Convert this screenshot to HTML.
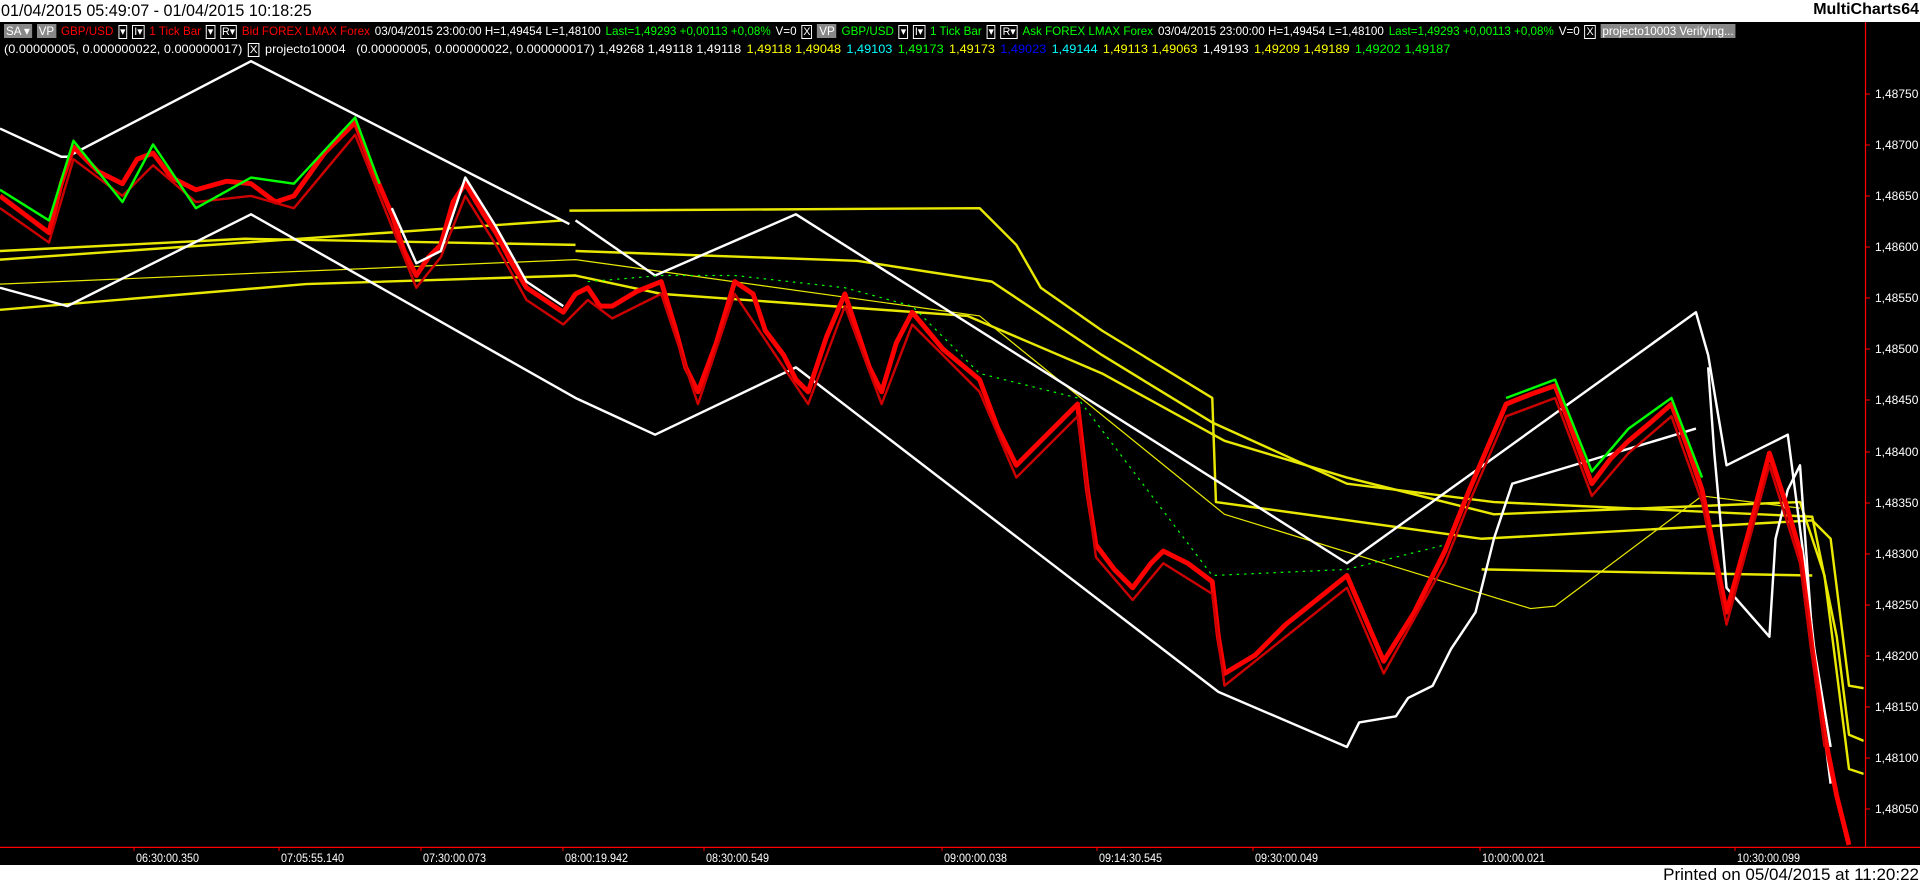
<!DOCTYPE html>
<html><head><meta charset="utf-8"><style>
body{margin:0;width:1920px;height:885px;overflow:hidden;background:#000;font-family:"Liberation Sans",Arial,sans-serif;position:relative}
#top{position:absolute;left:0;top:0;width:1920px;height:22px;background:#fff}
#title{position:absolute;left:1px;top:1px;font-size:17px;color:#000;transform:scaleX(0.95);transform-origin:0 0;white-space:nowrap}
#mc{position:absolute;right:1px;top:1px;font-size:16px;font-weight:bold;color:#000}
#bot{position:absolute;left:0;top:865px;width:1920px;height:20px;background:#fff}
#pr{position:absolute;right:1px;top:865px;font-size:17px;color:#000;white-space:nowrap}
.row{position:absolute;left:4px;font-size:12px;white-space:nowrap;color:#fff;transform-origin:0 0}
.row span{margin-right:5px}
.b{display:inline-block;border:1px solid #fff;padding:0 1px;line-height:12px;font-size:11px}
.g{display:inline-block;background:#888;color:#fff;padding:0 2px;line-height:14px}
.r{color:#f00}.gr{color:#0f0}.y{color:#ff0}.c{color:#0ff}.bl{color:#00f}
.pl{position:absolute;left:1875px;font-size:12px;color:#fff}
.tl{position:absolute;top:851px;font-size:12px;color:#fff;transform:scaleX(0.9);transform-origin:0 0}
</style></head><body>
<div id="top"><div id="title">01/04/2015 05:49:07 - 01/04/2015 10:18:25</div><div id="mc">MultiCharts64</div></div>

<svg style="position:absolute;left:0;top:0" width="1920" height="885">
<g transform="scale(1.2245)">
<clipPath id="cp"><rect x="0" y="18" width="1522" height="673"/></clipPath>
<g clip-path="url(#cp)" fill="none" stroke-linejoin="round">
<g stroke="#e8e800" stroke-width="2">
<polyline points="0,212 460,180"/>
<polyline points="465,172 800,170 830,200 850,235 900,270 990,325 993,410 1210,440 1480,425 1495,440 1510,560 1522,562"/>
<polyline points="0,205 200,195 470,200"/>
<polyline points="470,205 700,213 810,230 900,290 990,345 1100,395 1220,410 1480,422 1500,520 1510,600 1522,605"/>
<polyline points="0,253 250,232 470,225 540,240 790,258 900,305 1000,360 1100,390 1220,420 1470,410 1490,470 1510,628 1522,632"/>
<polyline points="1210,465 1480,470"/>
</g>
<polyline stroke="#e8e800" stroke-width="1" points="0,232 470,212 800,258 1000,420 1250,497 1270,495 1390,405 1470,415"/>
<g stroke="#fff" stroke-width="2">
<polyline points="0,105 50,128 55,128 205,50 465,183"/>
<polyline points="0,235 55,250 205,175 470,325 535,355 650,300 995,565 1100,610 1110,590 1140,585 1150,570 1170,560 1185,530 1205,500 1220,440 1235,395 1385,350"/>
<polyline points="470,180 535,225 650,175 1100,460 1385,255 1395,290 1410,380 1440,365 1460,355 1475,470 1485,560 1495,640"/>
<polyline points="1395,300 1400,370 1410,480 1445,520 1450,440 1460,400 1470,380 1480,520 1495,610"/>
</g>
<polyline stroke="#f00" stroke-width="4" points="0,160 20,175 40,190 50,150 60,120 80,140 100,150 112,130 125,125 140,145 160,155 185,148 205,150 225,165 240,160 265,125 290,100 305,140 320,175 330,205 340,225 350,210 360,200 370,165 380,150 395,175 405,190 418,215 430,235 445,245 460,255 470,240 480,235 490,250 500,250 520,238 540,230 552,270 560,300 570,320 585,280 600,230 615,240 625,270 640,290 650,310 660,320 675,275 690,240 700,270 710,300 720,320 732,280 745,255 770,285 800,310 815,350 830,380 855,355 880,330 888,400 895,445 910,465 925,480 940,460 950,450 970,460 990,475 995,520 1000,550 1025,535 1050,510 1075,490 1100,470 1115,505 1130,540 1155,500 1180,450 1190,425 1200,400 1215,365 1230,330 1250,322 1270,315 1285,355 1300,395 1315,375 1330,360 1348,345 1365,330 1378,365 1390,400 1400,450 1410,500 1428,435 1445,370 1458,410 1470,450 1480,530 1490,600 1500,650 1510,690"/>
<polyline stroke="#c00" stroke-width="2" points="0,170 40,198 60,130 100,160 125,135 160,165 205,160 240,170 290,110 320,185 340,235 360,210 380,160 405,200 430,245 460,265 480,245 500,260 540,240 570,330 600,240 640,300 660,330 690,250 720,330 745,265 800,320 830,390 880,340 895,455 925,490 950,460 990,485 1000,560 1050,520 1100,480 1130,550 1180,460 1200,410 1230,340 1270,325 1300,405 1330,370 1365,340 1390,410 1410,510 1445,380 1470,460 1490,610"/>
<polyline stroke="#0f0" stroke-width="2" points="0,155 40,180 60,115 100,165 125,118 160,170 205,145 240,150 290,96 310,150"/>
<polyline stroke="#0f0" stroke-width="2" points="1230,325 1270,310 1300,385 1330,350 1365,325 1390,390"/>
<polyline stroke="#0f0" stroke-width="1" stroke-dasharray="2 4" points="480,230 540,225 600,225 690,235 745,250 800,305 880,325 990,470 1100,465 1180,445"/>
<polyline stroke="#fff" stroke-width="2" points="320,170 340,215 360,205 380,145 405,185 430,230 460,250"/>
</g>
<line x1="1523.5" y1="18" x2="1523.5" y2="692" stroke="#f00" stroke-width="1"/>
<line x1="0" y1="692" x2="1568" y2="692" stroke="#f00" stroke-width="1"/>
</g>
<g stroke="#f00" stroke-width="1">
<line x1="1866" y1="94" x2="1870" y2="94"/><line x1="1866" y1="145" x2="1870" y2="145"/><line x1="1866" y1="196" x2="1870" y2="196"/><line x1="1866" y1="247" x2="1870" y2="247"/><line x1="1866" y1="298" x2="1870" y2="298"/><line x1="1866" y1="349" x2="1870" y2="349"/><line x1="1866" y1="400" x2="1870" y2="400"/><line x1="1866" y1="452" x2="1870" y2="452"/><line x1="1866" y1="503" x2="1870" y2="503"/><line x1="1866" y1="554" x2="1870" y2="554"/><line x1="1866" y1="605" x2="1870" y2="605"/><line x1="1866" y1="656" x2="1870" y2="656"/><line x1="1866" y1="707" x2="1870" y2="707"/><line x1="1866" y1="758" x2="1870" y2="758"/><line x1="1866" y1="809" x2="1870" y2="809"/>
<line x1="134" y1="847" x2="134" y2="851"/><line x1="279" y1="847" x2="279" y2="851"/><line x1="421" y1="847" x2="421" y2="851"/><line x1="563" y1="847" x2="563" y2="851"/><line x1="704" y1="847" x2="704" y2="851"/><line x1="942" y1="847" x2="942" y2="851"/><line x1="1097" y1="847" x2="1097" y2="851"/><line x1="1253" y1="847" x2="1253" y2="851"/><line x1="1480" y1="847" x2="1480" y2="851"/><line x1="1735" y1="847" x2="1735" y2="851"/>
</g>
</svg>

<div class="row" style="top:24px;transform:scaleX(0.97)"><span class="g">SA ▾</span><span class="g">VP</span><span class="r">GBP/USD</span><span class="b">▾</span><span class="b">I▾</span><span class="r">1 Tick Bar</span><span class="b">▾</span><span class="b">R▾</span><span class="r">Bid FOREX LMAX Forex</span><span>03/04/2015 23:00:00 H=1,49454 L=1,48100</span><span class="gr">Last=1,49293 +0,00113 +0,08%</span><span>V=0</span><span class="b">X</span><span class="g">VP</span><span class="gr">GBP/USD</span><span class="b">▾</span><span class="b">I▾</span><span class="gr">1 Tick Bar</span><span class="b">▾</span><span class="b">R▾</span><span class="gr">Ask FOREX LMAX Forex</span><span>03/04/2015 23:00:00 H=1,49454 L=1,48100</span><span class="gr">Last=1,49293 +0,00113 +0,08%</span><span>V=0</span><span class="b">X</span><span class="g">projecto10003 Verifying...</span></div>
<div class="row" style="top:42px;transform:scaleX(1.06)"><span>(0.00000005, 0.000000022, 0.000000017)</span><span class="b">X</span><span>projecto10004 &nbsp;&nbsp;(0.00000005, 0.000000022, 0.000000017) 1,49268 1,49118 1,49118</span><span class="y">1,49118 1,49048</span><span class="c">1,49103</span><span class="gr">1,49173</span><span class="y">1,49173</span><span class="bl">1,49023</span><span class="c">1,49144</span><span class="y">1,49113 1,49063</span><span>1,49193</span><span class="y">1,49209 1,49189</span><span class="gr">1,49202 1,49187</span></div>

<div class="pl" style="top:87px">1,48750</div><div class="pl" style="top:138px">1,48700</div><div class="pl" style="top:189px">1,48650</div><div class="pl" style="top:240px">1,48600</div><div class="pl" style="top:291px">1,48550</div><div class="pl" style="top:342px">1,48500</div><div class="pl" style="top:393px">1,48450</div><div class="pl" style="top:445px">1,48400</div><div class="pl" style="top:496px">1,48350</div><div class="pl" style="top:547px">1,48300</div><div class="pl" style="top:598px">1,48250</div><div class="pl" style="top:649px">1,48200</div><div class="pl" style="top:700px">1,48150</div><div class="pl" style="top:751px">1,48100</div><div class="pl" style="top:802px">1,48050</div>

<div class="tl" style="left:136px">06:30:00.350</div><div class="tl" style="left:281px">07:05:55.140</div><div class="tl" style="left:423px">07:30:00.073</div><div class="tl" style="left:565px">08:00:19.942</div><div class="tl" style="left:706px">08:30:00.549</div><div class="tl" style="left:944px">09:00:00.038</div><div class="tl" style="left:1099px">09:14:30.545</div><div class="tl" style="left:1255px">09:30:00.049</div><div class="tl" style="left:1482px">10:00:00.021</div><div class="tl" style="left:1737px">10:30:00.099</div>

<div id="bot"></div><div id="pr">Printed on 05/04/2015 at 11:20:22</div>
</body></html>
